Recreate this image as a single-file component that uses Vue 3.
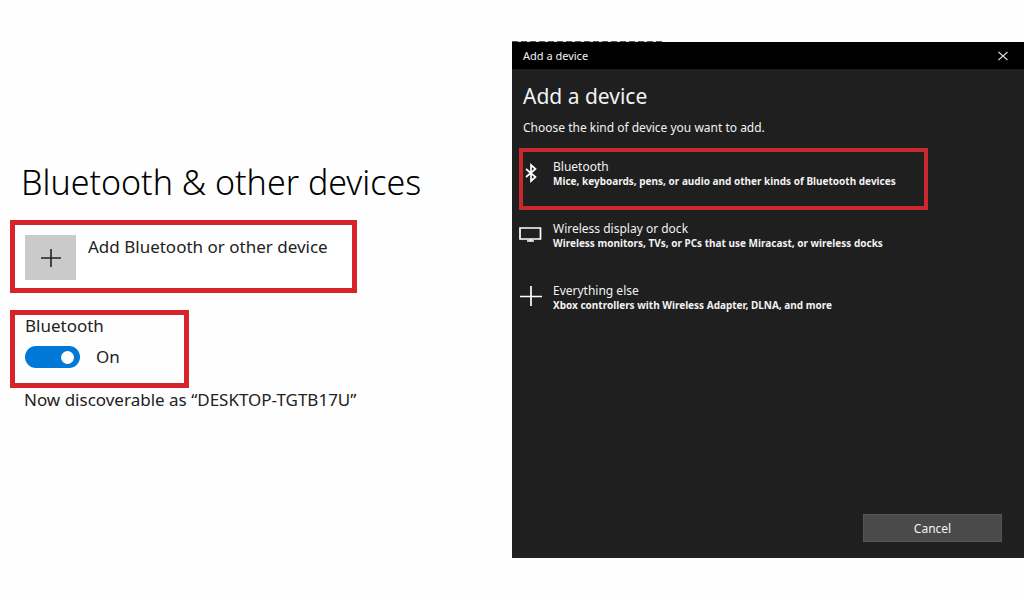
<template>
  <div class="page">
    <main class="settings">
      <h1>Bluetooth &amp; other devices</h1>

      <button class="add-device" type="button" @click="dialogOpen = true">
        <span class="add-tile">
          <svg width="22" height="20" viewBox="0 0 22 20" aria-hidden="true">
            <path d="M1 10H21M11 1V19" stroke="#222" stroke-width="1.6" />
          </svg>
        </span>
        <span class="add-label">Add Bluetooth or other device</span>
      </button>

      <div class="toggle-box">
        <label for="bluetooth">Bluetooth</label>
        <div class="toggle-row">
          <input id="bluetooth" v-model="enabled" type="checkbox" role="switch" class="switch" />
          <span>{{ enabled ? 'On' : 'Off' }}</span>
        </div>
      </div>

      <p class="discoverable">Now discoverable as “{{ deviceName }}”</p>
    </main>

    <section v-if="dialogOpen" class="dialog" role="dialog" aria-labelledby="dialog-title">
      <header class="title-bar">
        <span>Add a device</span>
        <button class="close-btn" type="button" aria-label="Close" @click="dialogOpen = false">
          <svg width="10" height="10" viewBox="0 0 10 10" aria-hidden="true">
            <path d="M0.5 1L9.5 9M9.5 1L0.5 9" stroke="#ddd" stroke-width="1.1" />
          </svg>
        </button>
      </header>

      <div class="dialog-body">
        <h2 id="dialog-title">Add a device</h2>
        <p class="intro">Choose the kind of device you want to add.</p>

        <div class="options">
          <button
            v-for="option in options"
            :key="option.key"
            type="button"
            class="option"
            :class="{ active: selected === option.key }"
            @click="selected = option.key"
          >
            <svg class="option-icon" width="24" height="24" viewBox="0 0 24 24" aria-hidden="true">
              <path :d="option.icon" />
            </svg>
            <span class="option-text">
              <span class="option-title">{{ option.title }}</span>
              <span class="option-desc">{{ option.desc }}</span>
            </span>
          </button>
        </div>
      </div>

      <footer class="dialog-footer">
        <button class="cancel-btn" type="button" @click="dialogOpen = false">Cancel</button>
      </footer>
    </section>
  </div>
</template>

<script setup>
import { ref } from 'vue'

const enabled = ref(true)
const dialogOpen = ref(true)
const selected = ref('bluetooth')
const deviceName = 'DESKTOP-TGTB17U'

const options = [
  {
    key: 'bluetooth',
    title: 'Bluetooth',
    desc: 'Mice, keyboards, pens, or audio and other kinds of Bluetooth devices',
    icon: 'M7 9L16.500 17L12 21V5L16.500 9L7 17'
  },
  {
    key: 'display',
    title: 'Wireless display or dock',
    desc: 'Wireless monitors, TVs, or PCs that use Miracast, or wireless docks',
    icon: 'M1 6H21.500V17H1ZM11.500 17V19M8 19H15'
  },
  {
    key: 'other',
    title: 'Everything else',
    desc: 'Xbox controllers with Wireless Adapter, DLNA, and more',
    icon: 'M1 12.500H23M12 2V22'
  }
]
</script>

<style>
body {
  margin: 0;
  background: #fefefe;
}
</style>

<style scoped>
.page {
  display: grid;
  grid-template-columns: 1fr 1fr;
  min-height: 100vh;
  padding: 42px 0;
  box-sizing: border-box;
  font-family: "Noto Sans", "Open Sans", sans-serif;
  color: #222;
}

button {
  font: inherit;
  color: inherit;
  cursor: pointer;
}

h1,
h2,
p {
  margin: 0;
  font-weight: 400;
}

.settings {
  display: flex;
  flex-direction: column;
  align-items: flex-start;
  padding: 118px 10px 0;
  font-size: 17px;
  line-height: 24px;
}

h1 {
  padding-left: 11px;
  font-size: 34px;
  line-height: 44px;
  font-weight: 300;
  color: #000;
}

.add-device {
  display: flex;
  align-items: flex-start;
  gap: 12px;
  min-width: 347px;
  margin-top: 16px;
  padding: 10px 10px 8px;
  border: 5px solid #d8232a;
  background: #fff;
  text-align: left;
}

.add-tile {
  display: flex;
  align-items: center;
  justify-content: center;
  width: 51px;
  height: 45px;
  background: #cacaca;
}

.toggle-box {
  min-width: 179px;
  box-sizing: border-box;
  margin-top: 17px;
  padding: 0 10px 15px;
  border: 5px solid #d8232a;
  line-height: 22px;
}

.toggle-box label {
  display: block;
  margin-bottom: 9px;
}

.toggle-row {
  display: flex;
  align-items: center;
  gap: 16px;
}

.switch {
  display: flex;
  align-items: center;
  justify-content: flex-end;
  appearance: none;
  width: 55px;
  height: 22px;
  margin: 0;
  padding: 0 6px;
  box-sizing: border-box;
  border-radius: 12px;
  background: #999;
  cursor: pointer;
}

.switch:checked {
  background: #0078d7;
}

.switch::before {
  content: "";
  width: 13px;
  height: 13px;
  border-radius: 50%;
  background: #fff;
}

.switch:not(:checked) {
  justify-content: flex-start;
}

.discoverable {
  padding-left: 14px;
}

.dialog {
  position: relative;
  display: flex;
  flex-direction: column;
  background: #1f1f1f;
  color: #f2f2f2;
}

/* sliver of the window behind, showing over the title bar */
.dialog::before {
  content: "";
  position: absolute;
  top: -1px;
  left: 0;
  width: 150px;
  height: 1px;
  background: repeating-linear-gradient(90deg, #555 0 6px, #ddd 6px 9px);
}

.title-bar {
  display: flex;
  align-items: center;
  justify-content: space-between;
  height: 27px;
  padding-left: 11px;
  background: #000;
  font-size: 11px;
}

.close-btn {
  display: flex;
  align-items: center;
  height: 27px;
  padding: 0 16px;
  border: 0;
  background: none;
}

.dialog-body {
  flex: 1;
  padding: 12px 7px 0;
}

h2 {
  padding-left: 4px;
  font-size: 21px;
  line-height: 30px;
}

.intro {
  padding-left: 4px;
  margin-top: 7px;
  font-size: 12px;
  line-height: 20px;
}

.options {
  display: flex;
  flex-direction: column;
  align-items: flex-start;
  margin-top: 10px;
}

.option {
  display: flex;
  align-items: flex-start;
  gap: 10px;
  min-width: 409px;
  height: 62px;
  padding: 12px 20px 0 0;
  border: 0;
  background: none;
  text-align: left;
}

.option.active {
  outline: 4px solid #c9282f;
  outline-offset: -4px;
}

.option-icon {
  flex: none;
  fill: none;
  stroke: #fff;
  stroke-width: 1.7;
}

.option-text {
  display: flex;
  flex-direction: column;
}

.option-title {
  font-size: 12px;
  line-height: 14px;
}

.option-desc {
  font-size: 10px;
  line-height: 14px;
  font-weight: 700;
}

.dialog-footer {
  display: flex;
  justify-content: flex-end;
  padding: 0 22px 16px;
}

.cancel-btn {
  width: 139px;
  height: 28px;
  padding: 0;
  border: 1px solid #555;
  background: #4a4a4a;
  font-size: 12px;
}
</style>
